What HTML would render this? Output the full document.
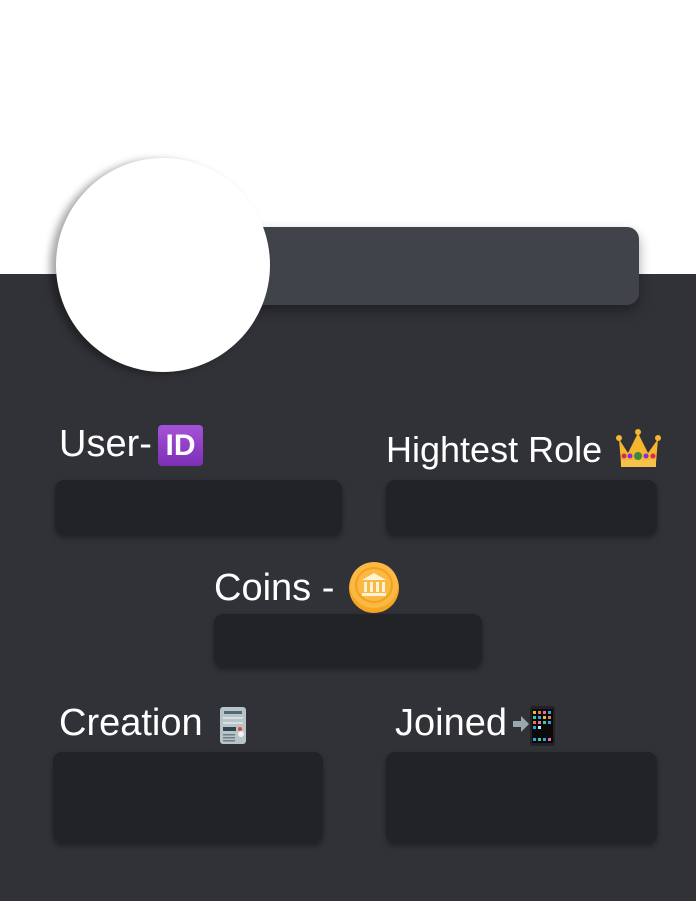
<!DOCTYPE html>
<html><head><meta charset="utf-8"><style>
*{margin:0;padding:0;box-sizing:border-box}
body{width:696px;height:901px;background:#fff;position:relative;overflow:hidden;font-family:"Liberation Sans","DejaVu Sans",sans-serif}
.dark{position:absolute;left:0;top:274px;width:696px;height:627px;background:#313237}
.bar{position:absolute;left:240px;top:227px;width:399px;height:78px;background:#404349;border-radius:12px;box-shadow:0 6px 12px rgba(0,0,0,.35)}
.circ{position:absolute;left:56px;top:158px;width:214px;height:214px;border-radius:50%;background:#fff;box-shadow:-6px 2px 8px rgba(0,0,0,.35)}
.box{position:absolute;background:#222326;border-radius:9px;box-shadow:0 3px 6px rgba(0,0,0,.35)}
.t{position:absolute;color:#fff;font-size:37px;line-height:1;white-space:nowrap}
.ico{position:absolute}
</style></head><body>
<div class="dark"></div>
<div class="bar"></div>
<div class="circ"></div>

<div class="t" style="left:59px;top:425px;font-size:38px">User-</div>
<div class="ico" style="left:158px;top:425px;width:45px;height:41px;border-radius:4px;background:linear-gradient(#a552d6,#7d2fb6);color:#fff;font-weight:bold;font-size:30px;line-height:41px;text-align:center">ID</div>

<div class="t" style="left:386px;top:432px;font-size:36px">Hightest Role</div>
<svg class="ico" style="left:616px;top:427px" width="45" height="41" viewBox="0 0 45 41">
<path d="M3 12 L12 26 L22 6 L32 26 L42 12 L40 36 L5 36 Z" fill="#f4b62f"/>
<rect x="5" y="33" width="35" height="7" fill="#f7c24a"/>
<circle cx="22" cy="5" r="3" fill="#f4b62f"/><circle cx="3" cy="11" r="3" fill="#f4b62f"/><circle cx="42" cy="11" r="3" fill="#f4b62f"/>
<circle cx="8" cy="29" r="2.5" fill="#d22f4e"/><circle cx="14" cy="29" r="2.5" fill="#8a2be2"/><circle cx="22" cy="29" r="4" fill="#3d8a3d"/><circle cx="30" cy="29" r="2.5" fill="#8a2be2"/><circle cx="37" cy="29" r="2.5" fill="#d22f4e"/>
</svg>

<div class="box" style="left:55px;top:480px;width:287px;height:55px"></div>
<div class="box" style="left:386px;top:480px;width:271px;height:55px"></div>

<div class="t" style="left:214px;top:569px;font-size:38px">Coins -</div>
<svg class="ico" style="left:348px;top:561px" width="52" height="52" viewBox="0 0 52 52">
<ellipse cx="26" cy="27" rx="25" ry="25" fill="#f5a623"/>
<ellipse cx="26" cy="24" rx="24" ry="23" fill="#fbb943"/>
<ellipse cx="26" cy="24" rx="18" ry="17" fill="none" stroke="#f4a020" stroke-width="2"/>
<path d="M14 19 L26 12 L38 19 Z" fill="#fff3d6"/><rect x="16" y="21" width="3" height="10" fill="#fff3d6"/><rect x="22" y="21" width="3" height="10" fill="#fff3d6"/><rect x="28" y="21" width="3" height="10" fill="#fff3d6"/><rect x="34" y="21" width="3" height="10" fill="#fff3d6"/><rect x="14" y="32" width="24" height="3" fill="#fff3d6"/>
</svg>
<div class="box" style="left:214px;top:614px;width:268px;height:53px"></div>

<div class="t" style="left:59px;top:704px;font-size:38px">Creation</div>
<svg class="ico" style="left:219px;top:706px" width="28" height="39" viewBox="0 0 28 39">
<rect x="1" y="1" width="26" height="37" rx="3" fill="#b8c4c8"/>
<rect x="5" y="5" width="18" height="3" fill="#4f6b78"/><rect x="4" y="11" width="20" height="2" fill="#d6dfe2"/><rect x="4" y="16" width="20" height="2" fill="#d6dfe2"/>
<rect x="4" y="21" width="13" height="4" fill="#2f4550"/><circle cx="21" cy="23" r="2" fill="#e04a3a"/><circle cx="22" cy="28" r="3" fill="#f0f0f0"/>
<rect x="4" y="28" width="12" height="1.5" fill="#6b7f87"/><rect x="4" y="31" width="12" height="1.5" fill="#6b7f87"/><rect x="4" y="34" width="12" height="1.5" fill="#6b7f87"/>
</svg>

<div class="t" style="left:395px;top:704px;font-size:38px">Joined</div>
<svg class="ico" style="left:511px;top:705px" width="46" height="42" viewBox="0 0 46 42">
<path d="M2 16 H10 V11 L18 19 L10 27 V22 H2 Z" fill="#9aa7ad"/>
<rect x="19" y="1" width="25" height="40" rx="3" fill="#222"/><rect x="21" y="4" width="21" height="34" fill="#0a0a0a"/>
<g><rect x="22" y="6" width="3" height="3" fill="#f5b53a"/><rect x="27" y="6" width="3" height="3" fill="#f07a3a"/><rect x="32" y="6" width="3" height="3" fill="#e86aa8"/><rect x="37" y="6" width="3" height="3" fill="#33a3e8"/>
<rect x="22" y="11" width="3" height="3" fill="#2fd0b0"/><rect x="27" y="11" width="3" height="3" fill="#33a3e8"/><rect x="32" y="11" width="3" height="3" fill="#f5b53a"/><rect x="37" y="11" width="3" height="3" fill="#f07a3a"/>
<rect x="22" y="16" width="3" height="3" fill="#f07a3a"/><rect x="27" y="16" width="3" height="3" fill="#e86aa8"/><rect x="32" y="16" width="3" height="3" fill="#2fd0b0"/><rect x="37" y="16" width="3" height="3" fill="#33a3e8"/>
<rect x="22" y="21" width="3" height="3" fill="#33a3e8"/><rect x="27" y="21" width="3" height="3" fill="#bfe6ff"/>
<rect x="22" y="33" width="3" height="3" fill="#33a3e8"/><rect x="27" y="33" width="3" height="3" fill="#2fd0b0"/><rect x="32" y="33" width="3" height="3" fill="#33a3e8"/><rect x="37" y="33" width="3" height="3" fill="#e86aa8"/></g>
</svg>

<div class="box" style="left:53px;top:752px;width:270px;height:91px"></div>
<div class="box" style="left:386px;top:752px;width:271px;height:91px"></div>
</body></html>
